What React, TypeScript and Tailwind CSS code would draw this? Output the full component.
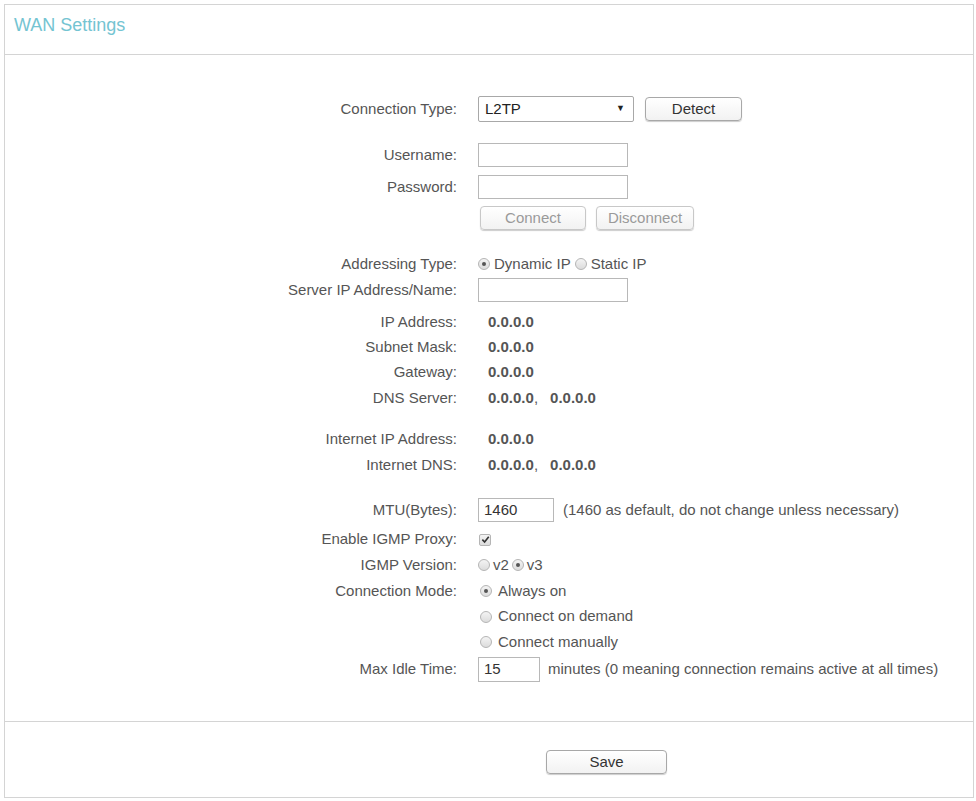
import React from 'react';

const font = { fontFamily: '"Liberation Sans", Arial, sans-serif' };

function Radio({ checked }: { checked?: boolean }) {
  return (
    <span className="inline-flex w-[12px] h-[12px] rounded-full border border-[#b5b5b5] bg-gradient-to-b from-[#f4f4f4] to-[#dcdcdc] items-center justify-center shrink-0">
      {checked && <span className="w-[4px] h-[4px] rounded-full bg-[#555]" />}
    </span>
  );
}

function Checkbox() {
  return (
    <span className="inline-flex w-[12px] h-[12px] rounded-[2px] border border-[#b5b5b5] bg-gradient-to-b from-[#f4f4f4] to-[#dcdcdc] items-center justify-center shrink-0">
      <svg width="9" height="9" viewBox="0 0 10 10">
        <path d="M1.5 5.2 L4 7.8 L8.6 2" fill="none" stroke="#333" strokeWidth="1.8" />
      </svg>
    </span>
  );
}

function Btn({ children, w, disabled }: { children: React.ReactNode; w: string; disabled?: boolean }) {
  return (
    <button
      className={`${w} h-[24px] rounded-[4px] border bg-gradient-to-b from-white to-[#f2f2f2] shadow-[0_1px_1px_rgba(0,0,0,0.2)] text-[15px] ${
        disabled ? 'border-[#c8c8c8] text-[#9a9a9a]' : 'border-[#a8a8a8] text-[#333]'
      }`}
    >
      {children}
    </button>
  );
}

function Input({ w, value, h = 'h-[24px]' }: { w: string; value?: string; h?: string }) {
  return (
    <div className={`${w} ${h} border border-[#b8b8b8] bg-white flex items-center px-[5px] text-[15px] text-[#333]`}>
      {value}
    </div>
  );
}

function Row({
  label,
  children,
  className = 'h-[26px]',
}: {
  label?: string;
  children?: React.ReactNode;
  className?: string;
}) {
  return (
    <div className={`flex items-center ${className}`}>
      <div className="w-[452px] text-right text-[#555] shrink-0">{label}</div>
      <div className="ml-[21px] flex items-center text-[#555]">{children}</div>
    </div>
  );
}

export default function App() {
  return (
    <div className="w-[976px] h-[801px] bg-white pt-[4px] pl-[4px]" style={font}>
      <div className="w-[970px] h-[794px] border border-[#d4d4d4] flex flex-col">
        {/* header */}
        <div className="h-[50px] border-b border-[#d4d4d4] pl-[9px] pt-[9px] shrink-0">
          <span className="text-[18px] leading-[20px] text-[#74c4d2]">WAN Settings</span>
        </div>

        {/* form */}
        <div className="pt-[41px] pb-[39px] text-[15px] border-b border-[#d4d4d4]">
          <Row label="Connection Type:">
            <div className="w-[156px] h-[26px] border border-[#a8a8a8] rounded-[2px] bg-white flex items-center justify-between pl-[6px] pr-[8px] text-[#222]">
              <span>L2TP</span>
              <span className="text-[9px]">▼</span>
            </div>
            <div className="ml-[11px]">
              <Btn w="w-[97px]">Detect</Btn>
            </div>
          </Row>

          <Row label="Username:" className="h-[26px] mt-[20px]">
            <Input w="w-[150px]" />
          </Row>
          <Row label="Password:" className="h-[26px] mt-[6px]">
            <Input w="w-[150px]" />
          </Row>
          <Row className="h-[26px] mt-[5px]">
            <div className="ml-[2px] flex gap-[10px]">
              <Btn w="w-[106px]" disabled>
                Connect
              </Btn>
              <Btn w="w-[98px]" disabled>
                Disconnect
              </Btn>
            </div>
          </Row>

          <Row label="Addressing Type:" className="h-[26px] mt-[20px]">
            <Radio checked />
            <span className="ml-[4px]">Dynamic IP</span>
            <span className="ml-[4px] flex">
              <Radio />
            </span>
            <span className="ml-[4px]">Static IP</span>
          </Row>
          <Row label="Server IP Address/Name:">
            <Input w="w-[150px]" />
          </Row>
          <Row label="IP Address:" className="h-[26px] mt-[6px]">
            <b className="ml-[10px]">0.0.0.0</b>
          </Row>
          <Row label="Subnet Mask:" className="h-[25px]">
            <b className="ml-[10px]">0.0.0.0</b>
          </Row>
          <Row label="Gateway:" className="h-[25px]">
            <b className="ml-[10px]">0.0.0.0</b>
          </Row>
          <Row label="DNS Server:">
            <b className="ml-[10px]">0.0.0.0</b>
            <span>,</span>
            <b className="ml-[12px]">0.0.0.0</b>
          </Row>

          <Row label="Internet IP Address:" className="h-[26px] mt-[15px]">
            <b className="ml-[10px]">0.0.0.0</b>
          </Row>
          <Row label="Internet DNS:">
            <b className="ml-[10px]">0.0.0.0</b>
            <span>,</span>
            <b className="ml-[12px]">0.0.0.0</b>
          </Row>

          <Row label="MTU(Bytes):" className="h-[26px] mt-[19px]">
            <Input w="w-[76px]" value="1460" />
            <span className="ml-[9px]">(1460 as default, do not change unless necessary)</span>
          </Row>
          <Row label="Enable IGMP Proxy:" className="h-[25px] mt-[4px]">
            <span className="ml-[1px] flex">
              <Checkbox />
            </span>
          </Row>
          <Row label="IGMP Version:">
            <Radio />
            <span className="ml-[3px]">v2</span>
            <span className="ml-[3px] flex">
              <Radio checked />
            </span>
            <span className="ml-[3px]">v3</span>
          </Row>
          <Row label="Connection Mode:">
            <span className="ml-[2px] flex">
              <Radio checked />
            </span>
            <span className="ml-[6px]">Always on</span>
          </Row>
          <Row className="h-[25px]">
            <span className="ml-[2px] flex">
              <Radio />
            </span>
            <span className="ml-[6px]">Connect on demand</span>
          </Row>
          <Row>
            <span className="ml-[2px] flex">
              <Radio />
            </span>
            <span className="ml-[6px]">Connect manually</span>
          </Row>
          <Row label="Max Idle Time:" className="h-[26px] mt-[1px]">
            <Input w="w-[62px]" value="15" h="h-[25px]" />
            <span className="ml-[8px]">minutes (0 meaning connection remains active at all times)</span>
          </Row>
        </div>

        {/* footer */}
        <div className="flex-1 pt-[28px]">
          <div className="ml-[541px]">
            <Btn w="w-[121px]">Save</Btn>
          </div>
        </div>
      </div>
    </div>
  );
}
